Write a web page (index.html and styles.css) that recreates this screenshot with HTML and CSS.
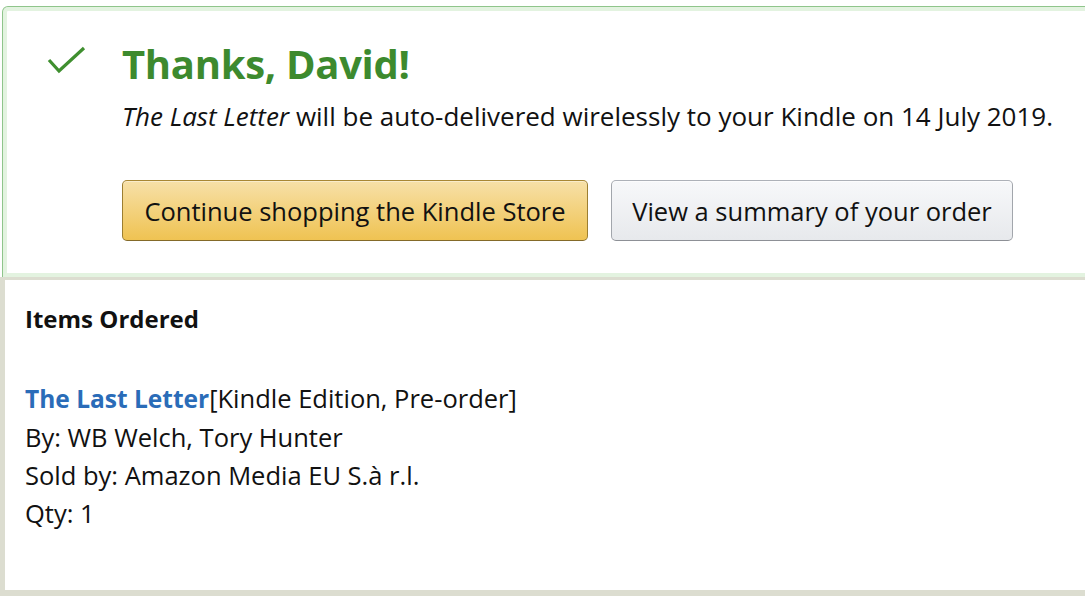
FILE: index.html
```html
<!DOCTYPE html>
<html lang="en">
<head>
<meta charset="utf-8">
<title>Thanks, David!</title>
<link rel="stylesheet" href="styles.css">
</head>
<body>
<div class="page">
  <section class="success">
    <div class="success-icon">
      <svg width="40" height="32" viewBox="0 0 40 32" aria-hidden="true">
        <polyline points="2,15 12,26 37,3" fill="none" stroke="#3f8f2f" stroke-width="3.2" stroke-linecap="butt" stroke-linejoin="miter"/>
      </svg>
    </div>
    <div class="success-body">
      <h1 class="success-title">Thanks, David!</h1>
      <p class="success-text"><i>The Last Letter</i> will be auto-delivered wirelessly to your Kindle on 14 July 2019.</p>
      <div class="actions">
        <a class="btn btn-primary" href="#">Continue shopping the Kindle Store</a>
        <a class="btn btn-secondary" href="#">View a summary of your order</a>
      </div>
    </div>
  </section>
  <section class="items">
    <h2 class="items-title">Items Ordered</h2>
    <div class="item">
      <div class="item-line"><a class="item-link" href="#">The Last Letter</a>[Kindle Edition, Pre-order]</div>
      <div class="item-line">By: WB Welch, Tory Hunter</div>
      <div class="item-line">Sold by: Amazon Media EU S.à r.l.</div>
      <div class="item-line">Qty: 1</div>
    </div>
  </section>
</div>
</body>
</html>
```
FILE: styles.css
```css
html, body {
  margin: 0;
  padding: 0;
  background: #ffffff;
}
body {
  font-family: "Open Sans", "Noto Sans", sans-serif;
  color: #111111;
  overflow: hidden;
  width: 1085px;
  height: 596px;
}
.page {
  padding-top: 6px;
}
.success {
  display: flex;
  margin-left: 2px;
  margin-right: -20px;
  height: 271px;
  box-sizing: border-box;
  border: 1px solid #8fc58b;
  border-bottom: none;
  border-radius: 6px 6px 0 0;
  box-shadow: inset 0 0 0 4px #e3f3e0;
  background: #ffffff;
}
.success-icon {
  width: 75px;
  padding-left: 44px;
  padding-top: 38px;
  flex: none;
}
.success-icon svg {
  display: block;
}
.success-body {
  flex: 1;
  padding-top: 28px;
}
.success-title {
  margin: 0;
  font-size: 40px;
  line-height: 58px;
  font-weight: 700;
  color: #3d8a2e;
  letter-spacing: -0.3px;
}
.success-text {
  margin: 8px 0 0;
  font-size: 26px;
  line-height: 30px;
  color: #111111;
  white-space: nowrap;
}
.actions {
  display: flex;
  gap: 23px;
  margin-top: 49px;
}
.btn {
  display: flex;
  align-items: center;
  justify-content: center;
  height: 61px;
  box-sizing: border-box;
  border-radius: 5px;
  font-size: 25.5px;
  color: #111111;
  text-decoration: none;
  border: 1px solid;
}
.btn-primary {
  width: 466px;
  background: linear-gradient(to bottom, #f7e0a8, #efc352);
  border-color: #a88734 #9c7e31 #846a29;
  box-shadow: inset 0 1px 0 rgba(255,255,255,0.4);
}
.btn-secondary {
  width: 402px;
  background: linear-gradient(to bottom, #f7f8fa, #e7e9ec);
  border-color: #adb1b8 #a2a6ac #8d9096;
  box-shadow: inset 0 1px 0 rgba(255,255,255,0.6);
}
.items {
  border-top: 3px solid #dcddd0;
  border-left: 5px solid #dcddd0;
  border-bottom: 6px solid #dcddd0;
  height: 319px;
  box-sizing: border-box;
  padding: 22px 20px 0;
  background: #ffffff;
}
.items-title {
  margin: 0;
  font-size: 24px;
  line-height: 34px;
  font-weight: 700;
}
.item {
  margin-top: 43px;
}
.item-line {
  font-size: 25.5px;
  line-height: 38px;
}
.item-link {
  color: #2a6cb8;
  font-weight: 700;
  font-size: 24.5px;
  text-decoration: none;
}
```
